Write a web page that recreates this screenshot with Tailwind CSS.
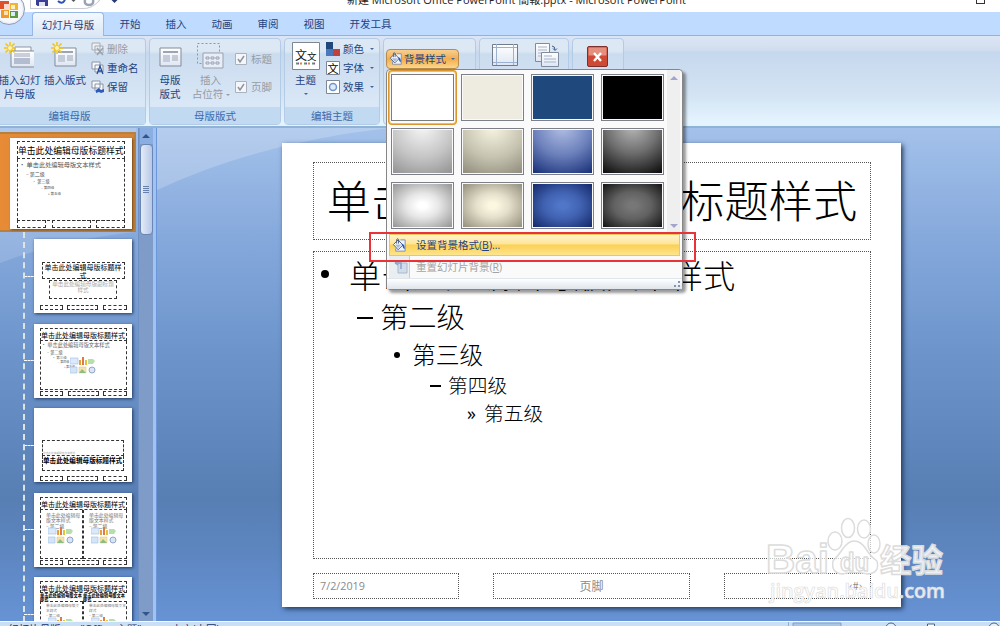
<!DOCTYPE html>
<html lang="zh-CN">
<head>
  <meta charset="UTF-8" />
  <title>Microsoft PowerPoint</title>
  <script src="https://cdn.jsdelivr.net/npm/@tailwindcss/browser@4"></script>
</head>
<body class="w-[1000px] h-[626px] overflow-hidden bg-[#6f97d0] font-['Open_Sans','Noto_Sans_CJK_SC',sans-serif] text-[10.5px] leading-[14px] text-[#1e4280]">
  <svg class="absolute w-0 h-0">
    <defs>
      <linearGradient id="btn" x1="0" y1="0" x2="0" y2="1">
        <stop offset="0" stop-color="#fff" /><stop offset="1" stop-color="#dfe6f2" />
      </linearGradient>
      <symbol id="star" viewBox="0 0 12 12">
        <path d="M6 0v12M0 6h12M1.5 1.5l9 9M10.5 1.5l-9 9" stroke="#f2c312" stroke-width="1.5" />
        <circle cx="6" cy="6" r="2" fill="#fff7b0" />
      </symbol>
      <symbol id="bucket" viewBox="0 0 16 16">
        <path d="M9 2h5v12H4v-3" fill="#eef3fa" stroke="#7f8ca5" />
        <path d="M1.500 7L6.500 2l5 5.500-5 5z" fill="#fff" stroke="#43587f" />
        <path d="M3 7h7l-3.500 4z" fill="#a9bcd9" />
        <path d="M5 6V1.500q1.500-1.500 2 0V6" fill="none" stroke="#43587f" />
        <path d="M10 6q4 0 3.500 6-2-1-2.500-4z" fill="#2a5cab" />
      </symbol>
      <symbol id="pics" viewBox="0 0 26 17">
        <path d="M0 1h8v6H0z" fill="#dce9f8" stroke="#a9c6ea" stroke-width=".7" />
        <path d="M9 3h2v5H9z" fill="#e9a03a" /><path d="M12 0h2v8h-2z" fill="#dd7a45" /><path d="M15 3h2v5h-2z" fill="#e6c23c" />
        <path d="M18 2h5l2 2-2 3h-5z" fill="#b6dfae" />
        <path d="M0 10h7v6H0z" fill="#d3e5f7" stroke="#a9c6ea" stroke-width=".7" />
        <path d="M9 10h7v6H9z" fill="#f3e4ae" stroke="#d8c07a" stroke-width=".5" /><path d="M9 16l3-4 4 4z" fill="#8bbd85" />
        <circle cx="22" cy="13" r="3" fill="#dbe4f1" stroke="#8fa6c8" />
      </symbol>
    </defs>
  </svg>

  <div class="relative flex flex-col w-[1000px] h-[626px]">
    <!-- title bar -->
    <header class="relative h-3 bg-white shrink-0">
      <div class="absolute left-[30px] -top-3 w-[74px] h-[21px] rounded-br-full rounded-bl border border-[#c9ccd4]"></div>
      <svg class="absolute left-[34px] top-0" width="90" height="9">
        <path d="M2 0h12v6H3.500L2 4.500z" fill="#3b3f94" /><path d="M5 2h6v4H5z" fill="#dfe3f5" />
        <path d="M24 1q4 4 7-1" fill="none" stroke="#2f52b5" stroke-width="2" />
        <path d="M37.500 0h4l-2 2z" fill="#555" />
        <path d="M51 0q-1 5 4 5t4-5" fill="none" stroke="#9aa3b5" stroke-width="2.500" />
        <path d="M77.500 0h6l-3 3z" fill="#273a73" />
      </svg>
      <div class="absolute left-[347px] -top-[9px] text-[11px] leading-[18px] text-[#222] whitespace-nowrap">新建 Microsoft Office PowerPoint 簡報.pptx - Microsoft PowerPoint</div>
      <div class="absolute left-[976px] -top-[6px] w-[9px] h-[10px] border border-[#333]"></div>
    </header>

    <!-- tabs -->
    <nav class="flex h-6 shrink-0 bg-[#bfdbff] border-b border-[#8fb3e2] pl-[32px]">
      <div class="w-[72px] h-6 pt-[5px] text-center bg-linear-to-b from-[#f3f8fe] to-[#dbe7f6] border border-b-0 border-[#97b8e4] rounded-t">幻灯片母版</div>
      <div class="w-[46px] pt-[5px] ml-[3px] text-center">开始</div>
      <div class="w-[46px] pt-[5px] text-center">插入</div>
      <div class="w-[46px] pt-[5px] text-center">动画</div>
      <div class="w-[46px] pt-[5px] text-center">审阅</div>
      <div class="w-[46px] pt-[5px] text-center">视图</div>
      <div class="w-[67px] pt-[5px] text-center">开发工具</div>
    </nav>

    <!-- ribbon -->
    <section class="flex h-[92px] pt-[2px] pb-px gap-[3px] shrink-0 border-b-2 border-[#8fb3d6] bg-[linear-gradient(#dbe5f3_0%,#d2def0_15%,#c6d8ee_18%,#d3e3f3_65%,#e3f4fe_95%)]">
      <div class="flex flex-col w-[146px] border border-l-0 border-[#b3cbe6] rounded-r bg-[linear-gradient(#dde8f5_0_14%,#cbdcef_18%,#d9e7f6_75%)]">
        <div class="flex h-[70px]">
          <div class="w-[41px] -ml-[1px] text-center whitespace-nowrap">
            <svg class="ml-[5px] mt-[3px]" width="30" height="28">
              <path d="M11 5h16v15H11z" fill="url(#btn)" stroke="#8d96a3" /><path d="M7 9h24v16H7z" fill="url(#btn)" stroke="#828b9a" />
              <path d="M10 12h16M10 14h16" stroke="#9da5b2" /><path d="M10 16h16v6H10z" fill="#b4bdd0" />
              <use href="#star" width="12" height="12" />
            </svg>
            <div class="flex justify-center mt-[3px]">插入幻灯</div><div>片母版</div>
          </div>
          <div class="w-[50px] text-center">
            <svg class="ml-[11px] mt-[3px]" width="28" height="28">
              <path d="M4 6h21v18H4z" fill="url(#btn)" stroke="#828b9a" /><path d="M7 10h15" stroke="#9da5b2" stroke-width="2" /><path d="M7 13h7v7H7z" fill="#c4ccdb" /><path d="M16 14h6M16 16h6M16 18h6" stroke="#9da5b2" />
              <use href="#star" width="12" height="12" />
            </svg>
            <div class="mt-[3px]">插入版式</div>
          </div>
          <div class="flex flex-col gap-[5px] pt-[3px] pl-[1px]">
            <div class="flex items-center gap-[2px] text-[#969ba4]">
              <svg width="14" height="14"><path d="M1 1h8v7H1zM4 4h8v7H4z" fill="#edf0f4" stroke="#a5abb5" /><path d="M6 6l6 7M12 6l-6 7" stroke="#9ba2af" stroke-width="1.500" /></svg>删除
            </div>
            <div class="flex items-center gap-[2px]">
              <svg width="14" height="14"><path d="M1 1h8v7H1zM4 4h8v7H4z" fill="#f7f9fc" stroke="#8b94a3" /><path d="M6 13l3-8 3 8M7 10h4" fill="none" stroke="#234a9b" stroke-width="1.300" /></svg>重命名
            </div>
            <div class="flex items-center gap-[2px]">
              <svg width="14" height="14"><path d="M1 1h8v7H1zM4 4h8v7H4z" fill="#f7f9fc" stroke="#8b94a3" /><path d="M5 10l3-2 2 2 3-1v3l-3 1-2-1-3 1z" fill="#2c5cb8" /></svg>保留
            </div>
          </div>
        </div>
        <div class="h-[17px] pt-[2px] bg-[#c1d9f1] text-center text-[#3e6aaa] pr-[6px]">编辑母版</div>
      </div>

      <div class="flex flex-col w-[132px] border border-[#b3cbe6] rounded bg-[linear-gradient(#dde8f5_0_14%,#cbdcef_18%,#d9e7f6_75%)]">
        <div class="flex h-[70px]">
          <div class="w-[40px] text-center">
            <svg class="ml-[8px] mt-[6px]" width="25" height="25">
              <path d="M2 3h21v18H2z" fill="url(#btn)" stroke="#828b9a" /><path d="M5 7h15" stroke="#9da5b2" stroke-width="2" /><path d="M5 10h7v7H5z" fill="#c4ccdb" /><path d="M14 11h6M14 13h6M14 15h6" stroke="#9da5b2" />
            </svg>
            <div class="mt-[3px]">母版</div><div>版式</div>
          </div>
          <div class="w-[42px] text-center text-[#969ba4] whitespace-nowrap">
            <svg class="ml-[6px] mt-[3px]" width="28" height="28">
              <path d="M1.500 1.500h22v20h-22z" fill="none" stroke="#8f97a3" stroke-dasharray="2 2" />
              <path d="M7 11h20v15H7z" fill="#e9eef6" stroke="#98a1ae" />
              <path d="M10 15h3v2h-3zM15 15h3v2h-3zM20 15h3v2h-3zM10 20h3v2h-3zM15 20h3v2h-3zM20 20h3v2h-3z" fill="none" stroke="#98a1b5" />
            </svg>
            <div class="mt-[3px] -ml-[1px]">插入</div><div>占位符 <span class="inline-block mb-[2px] border-x-[2px] border-t-[2px] border-x-transparent border-t-[#969ba4]"></span></div>
          </div>
          <div class="flex flex-col gap-[14px] pt-[13px] pl-[3px] text-[#969ba4]">
            <div class="flex items-center gap-[4px]"><svg width="12" height="12"><path d="M.5.5h11v11H.5z" fill="#f4f6f9" stroke="#aab2bd" /><path d="M3 6l2 3 4-6" fill="none" stroke="#8d949f" stroke-width="1.500" /></svg>标题</div>
            <div class="flex items-center gap-[4px]"><svg width="12" height="12"><path d="M.5.5h11v11H.5z" fill="#f4f6f9" stroke="#aab2bd" /><path d="M3 6l2 3 4-6" fill="none" stroke="#8d949f" stroke-width="1.500" /></svg>页脚</div>
          </div>
        </div>
        <div class="h-[17px] pt-[2px] bg-[#c1d9f1] text-center text-[#3e6aaa]">母版版式</div>
      </div>

      <div class="flex flex-col w-[96px] border border-[#b3cbe6] rounded bg-[linear-gradient(#dde8f5_0_14%,#cbdcef_18%,#d9e7f6_75%)]">
        <div class="flex h-[70px]">
          <div class="w-[41px] text-center">
            <svg class="ml-[7px] mt-[3px]" width="28" height="28">
              <path d="M.5.5h27v27H.5z" fill="#fff" stroke="#7e8794" />
              <text x="3" y="18" font-size="12" fill="#111">文</text><text x="15" y="18" font-size="9.500" fill="#111">文</text>
              <path d="M4 21.500h20" stroke="#48a06a" stroke-width="2" stroke-dasharray="2 6" /><path d="M8 21.500h16" stroke="#d9843b" stroke-width="2" stroke-dasharray="2 6" /><path d="M6 21.500h18" stroke="#8c4aa0" stroke-width="2" stroke-dasharray="1 7" />
            </svg>
            <div class="mt-[3px]">主题</div>
            <div class="mx-auto mt-[6px] w-0 border-x-[2.500px] border-t-[2.500px] border-x-transparent border-t-[#3f67a5]"></div>
          </div>
          <div class="flex flex-col gap-[5px] pt-[3px]">
            <div class="flex items-center gap-[3px]"><svg width="14" height="14"><path d="M0 0h7v7H0z" fill="#1f497d" /><path d="M7 0h7v7H7z" fill="#dfe5ee" /><path d="M0 7h7v7H0z" fill="#4978bc" /><path d="M7 7h7v7H7z" fill="#c0423f" /></svg>颜色<span class="ml-[3px] border-x-[2px] border-t-[2px] border-x-transparent border-t-[#3f67a5]"></span></div>
            <div class="flex items-center gap-[3px]"><svg width="14" height="14"><path d="M.5.5h13v13H.5z" fill="#fff" stroke="#7e8794" /><text x="1.500" y="11.500" font-size="11" fill="#000">文</text></svg>字体<span class="ml-[3px] border-x-[2px] border-t-[2px] border-x-transparent border-t-[#3f67a5]"></span></div>
            <div class="flex items-center gap-[3px]"><svg width="14" height="14"><path d="M.5.5h13v13H.5z" fill="#fff" stroke="#7e8794" /><circle cx="7" cy="7" r="3.500" fill="#dfe9f8" stroke="#6f95cf" stroke-width="1.500" /></svg>效果<span class="ml-[3px] border-x-[2px] border-t-[2px] border-x-transparent border-t-[#3f67a5]"></span></div>
          </div>
        </div>
        <div class="h-[17px] pt-[2px] bg-[#c1d9f1] text-center text-[#3e6aaa]">编辑主题</div>
      </div>

      <div class="w-[93px] pt-[10px] pl-[2px] border border-[#b3cbe6] rounded bg-[linear-gradient(#dde8f5_0_14%,#cbdcef_18%,#d9e7f6_75%)]">
        <div class="flex items-center w-[73px] h-[20px] pl-[2px] gap-[1px] border border-[#b58b4e] rounded-sm bg-linear-to-b from-[#f7cf92] via-[#f3ad4b] to-[#fbd68b]">
          <svg width="14" height="14"><use href="#bucket" width="14" height="14" /></svg>背景样式<span class="ml-[4px] border-x-[2.500px] border-t-[2.500px] border-x-transparent border-t-[#3f67a5]"></span>
        </div>
      </div>

      <div class="flex gap-[16px] w-[90px] pt-[4px] pl-[12px] border border-[#b3cbe6] rounded bg-[linear-gradient(#dde8f5_0_14%,#cbdcef_18%,#d9e7f6_75%)]">
        <svg width="27" height="24"><path d="M.5 1.500h25v21H.5z" fill="url(#btn)" stroke="#6f7b8f" /><path d="M4.500 1v21M21.500 1v21M1 4.500h24M1 19.500h24" stroke="#9cb1cf" /></svg>
        <svg width="25" height="25"><path d="M.5.500h14v18H.5z" fill="url(#btn)" stroke="#7f8ca0" /><path d="M3 4h9M3 7h9M3 10h9M3 13h4" stroke="#a5b3c9" /><path d="M6.500 9.500h17v14h-17z" fill="url(#btn)" stroke="#7f8ca0" /><path d="M9 13h8M9 16h12M9 19h12" stroke="#a5b3c9" /><path d="M17 3q3 0 3 4M18 5.500l2 2 2-2" fill="none" stroke="#3c5987" /></svg>
      </div>

      <div class="w-[52px] pt-[7px] pl-[14px] border border-[#b3cbe6] rounded bg-[linear-gradient(#dde8f5_0_14%,#cbdcef_18%,#d9e7f6_75%)]">
        <svg width="21" height="21"><rect x=".5" y=".5" width="20" height="20" rx="1.500" fill="#cf4a35" stroke="#7d2f2b" /><path d="M1.500 1.500h18v8h-18z" fill="#e58f7e" /><path d="M7 7l7 8M14 7l-7 8" stroke="#fff" stroke-width="2.400" /></svg>
      </div>
    </section>

    <!-- office button -->
    <svg class="absolute left-0 top-0" width="26" height="26">
      <circle cx="9" cy="9" r="15.500" fill="#e9edf4" stroke="#8f9db5" />
      <circle cx="9" cy="9" r="13.500" fill="#f6f8fb" />
      <path d="M-1 1h10v8H-1z" fill="#e2502a" /><path d="M4 4h6v6H4z" fill="#f6dccf" />
      <path d="M10 3h8v7h-8z" fill="#f3b32c" /><path d="M1 10h8v8H1z" fill="#f0992a" /><path d="M4 11h4v4H4z" fill="#fbe3b5" />
      <path d="M10 11h8v7h-8z" fill="#5c9c3e" /><path d="M11 5h4v4h-4z" fill="#fdf0c4" /><path d="M11 12h4v4h-4z" fill="#d8ebf9" />
    </svg>

    <!-- workspace -->
    <main class="relative flex h-[493px] shrink-0 bg-[linear-gradient(#a3c1ea_0%,#86a9dc_22%,#6d95cc_45%,#587fb4_75%,#5d86c0_86%,#6793d5_100%)]">
      <svg class="absolute left-0 top-0" width="1000" height="493">
        <path d="M157 0h233q-130 14-233 62z" fill="#fff" opacity=".2" />
        <path d="M0 0h136v104Q60 112 0 135z" fill="#fff" opacity=".14" />
      </svg>

      <!-- layout thumbnails -->
      <aside class="relative w-[138px] h-[493px] overflow-hidden pt-[4px] font-['Noto_Sans_CJK_SC',sans-serif] text-black">
        <div class="absolute left-[23px] top-[104px] h-[390px] border-l-2 border-dashed border-[#dbe5e5]"></div>
        <div class="relative w-[136px] h-[100px] pl-[10px] pt-[5px] border-2 border-l-0 border-[#b8803e] bg-linear-to-r from-[#e78b35] to-[#d2843a]">
          <div class="w-[122px] h-[91px] -mt-px pt-[3px] pl-[7px] bg-white shadow-[1px_1px_2px_#6b4317]">
            <div class="w-[108px] h-[18px] border border-dashed border-[#333] text-[8.8px] leading-[17px] whitespace-nowrap">单击此处编辑母版标题样式</div>
            <div class="w-[108px] h-[62px] border border-t-0 border-dashed border-[#333] text-[#555] whitespace-nowrap">
              <div class="pl-[1px] text-[6.200px] leading-[11px]">• 单击此处编辑母版文本样式</div>
              <div class="pl-[8px] text-[5px] leading-[8px]">– 第二级</div>
              <div class="pl-[14px] text-[4.200px] leading-[7px]">• 第三级</div>
              <div class="pl-[23px] text-[3.500px] leading-[6px]">– 第四级</div>
              <div class="pl-[30px] text-[3.500px] leading-[6px]">» 第五级</div>
            </div>
            <div class="flex justify-between w-[108px] h-[8px] mt-[-1px]"><i class="w-[29px] border border-dashed border-[#333]"></i><i class="w-[39px] border border-dashed border-[#333]"></i><i class="w-[29px] border border-dashed border-[#333]"></i></div>
          </div>
        </div>

        <div class="flex flex-col gap-[10.500px] pt-[7px] pl-[24px]">
          <div class="flex items-center"><i class="w-[10px] border-t border-dashed border-white"></i>
            <div class="w-[98px] h-[74px] bg-white shadow-[1px_1px_3px_#223a5e] pt-[23px] px-[6px] flex flex-col items-center">
              <div class="w-[83px] h-[17px] shrink-0 border border-dashed border-[#333] text-[7px] leading-[8px] text-center">单击此处编辑母版标题样式</div>
              <div class="w-[68px] h-[19px] shrink-0 mt-[1px] border border-dashed border-[#333] text-[5.600px] leading-[6px] text-center text-[#aaa]">单击此处编辑母版副标题样式</div>
              <div class="flex justify-between w-[87px] h-[5px] mt-[6px] shrink-0"><i class="w-[23px] border border-dashed border-[#333]"></i><i class="w-[31px] border border-dashed border-[#333]"></i><i class="w-[24px] border border-dashed border-[#333]"></i></div>
            </div>
          </div>

          <div class="flex items-center"><i class="w-[10px] border-t border-dashed border-white"></i>
            <div class="relative w-[98px] h-[74px] bg-white shadow-[1px_1px_3px_#223a5e] pt-[4px] pl-[6px]">
              <div class="w-[87px] h-[13px] border border-dashed border-[#333] text-[7px] leading-[12px] whitespace-nowrap">单击此处编辑母版标题样式</div>
              <div class="w-[87px] h-[49px] border border-t-0 border-dashed border-[#333] text-[#666] whitespace-nowrap">
                <div class="text-[5.200px] leading-[8px]">• 单击此处编辑母版文本样式</div>
                <div class="pl-[6px] text-[4.200px] leading-[6px]">– 第二级</div>
                <div class="pl-[11px] text-[3.500px] leading-[5px]">• 第三级</div>
                <div class="pl-[17px] text-[3px] leading-[5px]">– 第四级</div>
                <div class="pl-[23px] text-[3px] leading-[5px]">» 第五级</div>
              </div>
              <svg class="absolute left-[36px] top-[33px]" width="26" height="17"><use href="#pics" width="26" height="17" /></svg>
              <div class="flex justify-between w-[87px] h-[5px] mt-[1px]"><i class="w-[23px] border border-dashed border-[#333]"></i><i class="w-[31px] border border-dashed border-[#333]"></i><i class="w-[24px] border border-dashed border-[#333]"></i></div>
            </div>
          </div>

          <div class="flex items-center"><i class="w-[10px] border-t border-dashed border-white"></i>
            <div class="w-[98px] h-[74px] bg-white shadow-[1px_1px_3px_#223a5e] pt-[32px] px-[6px] flex flex-col items-center">
              <div class="w-[82px] h-[16px] pt-[11px] shrink-0 border border-dashed border-[#333] text-[2.700px] leading-[3px] text-[#aaa]">单击此处编辑母版文本样式</div>
              <div class="w-[82px] h-[15px] shrink-0 border border-t-0 border-dashed border-[#333] text-[6.600px] leading-[8px] font-bold whitespace-nowrap">单击此处编辑母版标题样式</div>
              <div class="flex justify-between w-[87px] h-[5px] mt-[5px] shrink-0"><i class="w-[23px] border border-dashed border-[#333]"></i><i class="w-[31px] border border-dashed border-[#333]"></i><i class="w-[24px] border border-dashed border-[#333]"></i></div>
            </div>
          </div>

          <div class="flex items-center"><i class="w-[10px] border-t border-dashed border-white"></i>
            <div class="w-[98px] h-[74px] bg-white shadow-[1px_1px_3px_#223a5e] pt-[4px] pl-[6px]">
              <div class="w-[87px] h-[13px] border border-dashed border-[#333] text-[7px] leading-[12px] whitespace-nowrap">单击此处编辑母版标题样式</div>
              <div class="flex w-[87px] h-[49px] text-[4.900px] leading-[5.500px] text-[#777]">
                <div class="w-[43px] pl-[5px] pt-[2px] border border-t-0 border-dashed border-[#333]">单击此处编辑母版文本样式<br />– 第二级<svg class="ml-[2px] -mt-px" width="26" height="17"><use href="#pics" width="26" height="17" /></svg></div>
                <div class="w-[44px] pl-[5px] pt-[2px] border border-t-0 border-dashed border-[#333]">单击此处编辑母版文本样式<br />– 第二级<svg class="ml-[2px] -mt-px" width="26" height="17"><use href="#pics" width="26" height="17" /></svg></div>
              </div>
              <div class="flex justify-between w-[87px] h-[5px] mt-[1px]"><i class="w-[23px] border border-dashed border-[#333]"></i><i class="w-[31px] border border-dashed border-[#333]"></i><i class="w-[24px] border border-dashed border-[#333]"></i></div>
            </div>
          </div>

          <div class="flex items-center"><i class="w-[10px] border-t border-dashed border-white"></i>
            <div class="w-[98px] h-[74px] bg-white shadow-[1px_1px_3px_#223a5e] pt-[4px] pl-[6px]">
              <div class="w-[87px] h-[12px] border border-dashed border-[#333] text-[7px] leading-[12px] whitespace-nowrap">单击此处编辑母版标题样式</div>
              <div class="flex w-[87px] h-[8px] text-[4.200px] leading-[4px] font-bold"><div class="w-[43px]">单击此处编辑母版文本样式</div><div class="w-[44px]">单击此处编辑母版文本样式</div></div>
              <div class="flex w-[87px] h-[44px] text-[3.700px] leading-[5px] text-[#777]">
                <div class="w-[43px] pl-[5px] pt-[1px] border border-dashed border-[#333]">单击此处编辑母版文本样式<br />– 第二级<svg class="ml-[2px] -mt-px" width="26" height="17"><use href="#pics" width="26" height="17" /></svg></div>
                <div class="w-[44px] pl-[5px] pt-[1px] border border-dashed border-[#333]">单击此处编辑母版文本样式<br />– 第二级<svg class="ml-[2px] -mt-px" width="26" height="17"><use href="#pics" width="26" height="17" /></svg></div>
              </div>
            </div>
          </div>
        </div>
      </aside>

      <!-- scrollbar -->
      <div class="relative flex flex-col items-center w-[15px] bg-[#7f9cc9] border-l border-[#6f90c4]">
        <div class="flex items-center justify-center w-[13px] h-[16px] bg-[#8aaee2]"><i class="border-x-4 border-b-4 border-x-transparent border-b-[#31548e]"></i></div>
        <div class="flex flex-col items-center justify-center gap-px w-[13px] h-[91px] border border-[#6a86b4] rounded-sm bg-linear-to-r from-[#e4ebf7] to-[#b6c8e6]">
          <i class="w-[6px] border-t border-[#6581ac]"></i><i class="w-[6px] border-t border-[#6581ac]"></i><i class="w-[6px] border-t border-[#6581ac]"></i><i class="w-[6px] border-t border-[#6581ac]"></i>
        </div>
        <i class="mt-auto mb-[5px] border-x-4 border-t-4 border-x-transparent border-t-[#31548e]"></i>
      </div>
      <div class="relative w-[4px] bg-[#9fc3f4] border-r border-[#6b97d8]"></div>

      <!-- slide -->
      <div class="relative w-[619px] h-[464px] ml-[125px] mt-[15px] bg-white shadow-[2px_2px_5px_#223a5e] text-black font-['Noto_Sans_CJK_SC',sans-serif] font-light whitespace-nowrap">
        <div class="absolute left-[31px] top-[19px] w-[558px] h-[78px] pb-[4px] flex items-center justify-center border border-dotted border-[#555] text-[44.200px]">单击此处编辑母版标题样式</div>
        <div class="absolute left-[31px] top-[108px] w-[558px] h-[308px] border border-dotted border-[#555]">
          <div class="flex items-center h-[44px] pl-[7px] text-[32.200px]"><span class="w-[8px] h-[8px] mr-[20px] rounded-full bg-black"></span>单击此处编辑母版文本样式</div>
          <div class="flex items-center h-[40px] pl-[43px] text-[28.300px]"><span class="w-[16px] h-[2px] mr-[7px] mt-[4px] bg-black"></span>第二级</div>
          <div class="flex items-center h-[35px] pl-[80px] text-[23.800px]"><span class="w-[6px] h-[6px] mr-[12px] mt-[2px] rounded-full bg-black"></span>第三级</div>
          <div class="flex items-center h-[28px] pl-[116px] text-[19.800px]"><span class="w-[11px] h-[2px] mr-[7px] mt-[2px] bg-black"></span>第四级</div>
          <div class="flex items-center h-[28px] pl-[153px] text-[19.800px]"><span class="w-[17px] text-[18px] font-normal font-['Open_Sans']">»</span>第五级</div>
        </div>
        <div class="absolute left-[31px] top-[430px] w-[558px] h-[26px] flex justify-between font-normal text-[12px] leading-[23px] text-[#8a8a8a]">
          <div class="w-[146px] pl-[6px] border border-dotted border-[#555] font-['Open_Sans'] text-[10.800px]">7/2/2019</div>
          <div class="w-[197px] text-center border border-dotted border-[#555]">页脚</div>
          <div class="w-[147px] pr-[8px] text-right border border-dotted border-[#555] text-[11px]">‹#›</div>
        </div>
      </div>
    </main>

    <!-- status bar, cut off by the window edge -->
    <footer class="relative flex h-[5px] shrink-0 overflow-hidden border-t border-[#f3f9ff] bg-[#c9dff6] text-[#15336e]">
      <div class="pl-[8px] leading-[14px] whitespace-nowrap">幻灯片母版</div>
      <div class="pl-[20px] leading-[14px] whitespace-nowrap">"Office 主题"</div>
      <div class="pl-[30px] leading-[14px] whitespace-nowrap">中文(中国)</div>
      <svg class="absolute left-[785px] top-0" width="215" height="5"><path d="M3.500 0v5" stroke="#8eaed6" /><path d="M8 1h48v4H8z" fill="#a9c6e8" stroke="#7f9fcb" /><circle cx="106" cy="6" r="5" fill="#e8f1fb" stroke="#47618e" /><path d="M142.500 5V2h7v3" fill="#fff" stroke="#47618e" /><circle cx="209" cy="6" r="5" fill="#e8f1fb" stroke="#47618e" /></svg>
    </footer>

    <!-- background styles menu -->
    <div class="absolute left-[386px] top-[69px] w-[297px] h-[221px] flex flex-col bg-[#fafafa] border border-[#868686] rounded-sm shadow-[3px_3px_3px_#0006]">
      <div class="flex h-[164px]">
        <div class="relative grid grid-cols-4 gap-x-[7px] gap-y-[7px] w-[273px] h-[155px] mt-[4px] ml-[4px]">
          <div class="absolute -left-[3px] -top-[4px] w-[69px] h-[55px] rounded-sm border-2 border-[#f3c04e] outline -outline-offset-1 outline-[#d9962f]"></div>
          <div class="relative border border-[#7d7d7d] bg-white"></div>
          <div class="border border-[#7d8088] p-px"><div class="h-full bg-[#eeece1]"></div></div>
          <div class="border border-[#7d8088] p-px"><div class="h-full bg-[#1f497d]"></div></div>
          <div class="border border-[#7d8088] p-px"><div class="h-full bg-black"></div></div>
          <div class="border border-[#7d8088] p-px"><div class="h-full bg-[radial-gradient(ellipse_90%_125%_at_50%_-10%,#f8f8f8,#c4c4c4_60%,#979797)]"></div></div>
          <div class="border border-[#7d8088] p-px"><div class="h-full bg-[radial-gradient(ellipse_90%_125%_at_50%_-10%,#faf7e4,#c5c2b0_60%,#949180)]"></div></div>
          <div class="border border-[#7d8088] p-px"><div class="h-full bg-[radial-gradient(ellipse_90%_125%_at_50%_-10%,#b5c1e6,#6b80bb_55%,#1d357c)]"></div></div>
          <div class="border border-[#7d8088] p-px"><div class="h-full bg-[radial-gradient(ellipse_90%_125%_at_50%_-10%,#b9b9b9,#6f6f6f_50%,#111)]"></div></div>
          <div class="border border-[#7d8088] p-px"><div class="h-full bg-[radial-gradient(#fff_10%,#e6e6e6_40%,#949494)]"></div></div>
          <div class="border border-[#7d8088] p-px"><div class="h-full bg-[radial-gradient(#fcf7e1_10%,#e4dfca_40%,#918e7c)]"></div></div>
          <div class="border border-[#7d8088] p-px"><div class="h-full bg-[radial-gradient(#5076c8_10%,#4061b0_45%,#14286a)]"></div></div>
          <div class="border border-[#7d8088] p-px"><div class="h-full bg-[radial-gradient(#777_10%,#616161_45%,#141414)]"></div></div>
        </div>
        <div class="flex flex-col items-center justify-between w-[13px] ml-[3px] py-[6px] bg-[#efefef]">
          <i class="border-x-4 border-b-4 border-x-transparent border-b-[#a3a5cd]"></i>
          <i class="border-x-4 border-t-4 border-x-transparent border-t-[#a3a5cd]"></i>
        </div>
      </div>
      <div class="flex items-center h-[22px] mx-[2px] pl-[2px] gap-[9px] border border-[#e9c95e] bg-[linear-gradient(#fff3c9,#fde59a_45%,#fcd052_50%,#fde48f)]">
        <svg width="15" height="15"><use href="#bucket" width="15" height="15" /></svg><span>设置背景格式(<u>B</u>)...</span>
      </div>
      <div class="flex items-center h-[22px] mx-[2px] text-[#a3a3a3]">
        <div class="flex items-center justify-center w-[21px] h-full mr-[6px] pl-[4px] bg-[#e9eef0] border-r border-[#c8cdd0]"><svg width="14" height="14"><path d="M4 3h9v10H4z" fill="#d3dcec" stroke="#a9b8d0" /><path d="M1 3h6v6M1 3l3-2M1 3l3 2" fill="none" stroke="#8fa4c6" stroke-width="1.500" /></svg></div>
        <span>重置幻灯片背景(<u>R</u>)</span>
      </div>
      <div class="flex items-end justify-end flex-1 p-[2px] border-t border-[#dfe6ec] bg-linear-to-b from-white to-[#dfe5ec]"><svg width="6" height="6"><path d="M4 0h2v2H4zM0 4h2v2H0zM4 4h2v2H4z" fill="#8593ad" /></svg></div>
    </div>

    <!-- highlight frame -->
    <div class="absolute left-[369px] top-[232px] w-[327px] h-[30px] border-2 border-[#ea3338]"></div>

    <!-- watermark -->
    <svg class="absolute left-[760px] top-[510px]" width="200" height="100" font-family="'Open Sans','Noto Sans CJK SC',sans-serif" stroke-linejoin="round">
      <g fill="#fff" fill-opacity=".65" stroke="#dcdcdc" stroke-width="1.500">
        <ellipse cx="75" cy="31" rx="7" ry="9" /><ellipse cx="88" cy="18" rx="6.500" ry="9.500" /><ellipse cx="104" cy="19" rx="6.500" ry="9" /><ellipse cx="114" cy="34" rx="6" ry="9" />
        <path d="M94 31q7 0 12 8t11 12q3 12-9 13-14-3-26 0-11-1-9-13 5-5 9-11 6-9 12-9z" />
        <text x="6" y="63" font-size="40" font-weight="700" font-family="Liberation Sans" textLength="63" lengthAdjust="spacingAndGlyphs">Bai</text>
        <text x="80" y="61" font-size="25" font-weight="700" font-family="Liberation Sans" textLength="29" lengthAdjust="spacingAndGlyphs">du</text>
        <text x="120" y="62" font-size="31.500" font-weight="700" fill-opacity=".9" textLength="63">经验</text>
      </g>
      <text x="10" y="88" font-size="20.500" font-weight="600" fill="#fff" fill-opacity=".85" stroke="#dcdcdc" stroke-width=".7" textLength="175" lengthAdjust="spacingAndGlyphs">jingyan.baidu.com</text>
    </svg>
  </div>
</body>
</html>
